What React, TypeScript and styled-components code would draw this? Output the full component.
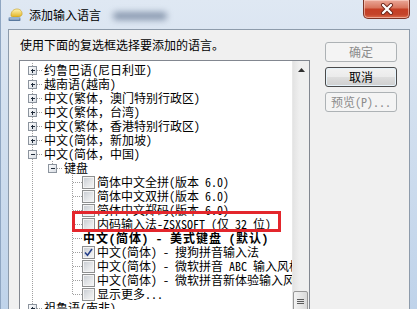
import React from "react";
import styled, { createGlobalStyle } from "styled-components";

const FONT = `"Noto Sans Mono CJK SC", "Noto Sans CJK SC", "DejaVu Sans", sans-serif`;

const GlobalStyle = createGlobalStyle`
  html, body {
    margin: 0;
    padding: 0;
    background: #ffffff;
  }
  body {
    font-family: ${FONT};
    font-size: 12px;
  }
`;

/* ---------- window frame ---------- */
const Window = styled.div`
  position: relative;
  width: 417px;
  height: 309px;
  overflow: hidden;
  display: flex;
  flex-direction: column;
  background: linear-gradient(180deg, #dfe8f3 0%, #d3e0ef 35%, #bfd3ea 100%);
  box-shadow: inset 1px 0 0 #8fa6c2;
`;

const TitleBar = styled.div`
  height: 29px;
  flex: none;
  display: flex;
  align-items: center;
  padding-left: 8px;
`;

const TitleIcon = styled.svg`
  flex: none;
  margin-top: -1px;
`;

const TitleText = styled.span`
  margin-left: 6px;
  line-height: 14px;
  color: #000;
`;

const Blurred = styled.div`
  width: 54px;
  height: 8px;
  margin-left: 12px;
  margin-top: 2px;
  border-radius: 4px;
  background: rgba(70, 90, 120, 0.55);
  filter: blur(3px);
`;

const CloseButton = styled.div`
  align-self: flex-start;
  margin-left: auto;
  margin-right: 7px;
  width: 45px;
  height: 18px;
  display: flex;
  align-items: center;
  justify-content: center;
  border: 1px solid #7c3426;
  border-top: none;
  border-radius: 0 0 5px 5px;
  background: linear-gradient(
    180deg,
    #eaa898 0%,
    #d9775f 42%,
    #c53f25 52%,
    #c4442a 80%,
    #dc6c4c 100%
  );
  box-shadow: inset 0 0 0 1px rgba(255, 220, 210, 0.55);
`;

/* ---------- client area ---------- */
const Client = styled.div`
  flex: 1;
  margin: 0 7px 0 8px;
  border: 1px solid #8d9bab;
  border-bottom: none;
  background: #f0f0f0;
  display: grid;
  grid-template-columns: 291px 72px;
  column-gap: 15px;
  padding-left: 10px;
  align-items: start;
`;

const LeftCol = styled.div`
  display: flex;
  flex-direction: column;
`;

const Hint = styled.div`
  margin: 8px 0 0 1px;
  line-height: 14px;
  color: #000;
  white-space: nowrap;
`;

const Tree = styled.div`
  margin-top: 8px;
  height: 262px;
  display: flex;
  border: 1px solid #828790;
  background: #ffffff;
`;

const TreeBody = styled.div`
  flex: 1;
  overflow: hidden;
  padding: 2px 0 0 2px;
`;

const Row = styled.div`
  height: 14px;
  display: flex;
  align-items: center;
  white-space: nowrap;
`;

const Label = styled.span<{ $bold?: boolean }>`
  margin-left: ${(p) => (p.$bold ? 1 : 2)}px;
  line-height: 14px;
  color: #000;
  font-weight: ${(p) => (p.$bold ? 700 : 400)};
  letter-spacing: ${(p) => (p.$bold ? "1px" : "0")};
`;

const GuideSvg = styled.svg`
  flex: none;
  display: block;
`;

const CheckBox = styled.span`
  flex: none;
  width: 13px;
  height: 13px;
  box-sizing: border-box;
  border: 1px solid #8e8f8f;
  background: linear-gradient(135deg, #c6cad0 0%, #e4e6e8 55%, #f7f7f7 100%);
  box-shadow: inset 0 0 0 1px #f4f4f4;
  display: flex;
  align-items: center;
  justify-content: center;
`;

/* ---------- scrollbar ---------- */
const ScrollBar = styled.div`
  width: 17px;
  flex: none;
  display: flex;
  flex-direction: column;
  background: linear-gradient(90deg, #e3e3e3 0%, #efefef 40%, #efefef 100%);
  border-left: 1px solid #e8e8e8;
  box-sizing: border-box;
`;

const ArrowButton = styled.div`
  height: 17px;
  display: flex;
  align-items: center;
  justify-content: center;
`;

const Thumb = styled.div<{ $offset: number }>`
  margin: ${(p) => p.$offset}px 0 0 0;
  width: 15px;
  height: 20px;
  box-sizing: border-box;
  border: 1px solid #979797;
  border-radius: 2px;
  background: linear-gradient(90deg, #f3f3f3 0%, #e6e6e6 50%, #d9d9d9 100%);
  display: flex;
  align-items: center;
  justify-content: center;
`;

/* ---------- buttons ---------- */
const ButtonCol = styled.div`
  padding-top: 12px;
  display: flex;
  flex-direction: column;
  gap: 5px;
`;

const Button = styled.button<{ $default?: boolean }>`
  width: 72px;
  height: 20px;
  padding: 0;
  font-family: ${FONT};
  font-size: 12px;
  line-height: 18px;
  color: #000;
  border-radius: 3px;
  border: 1px solid ${(p) => (p.$default ? "#4a4a4a" : "#707070")};
  background: linear-gradient(180deg, #f2f2f2 0%, #ebebeb 48%, #dddddd 52%, #cfcfcf 100%);
  box-shadow: inset 0 0 0 1px ${(p) => (p.$default ? "#e6f3fb" : "#fcfcfc")};

  &:disabled {
    border-color: #adb2b5;
    background: #f4f4f4;
    box-shadow: none;
    color: #8c8c8c;
  }
`;

/* ---------- annotation ---------- */
const Highlight = styled.div`
  position: absolute;
  left: 72px;
  top: 211px;
  width: 209px;
  height: 21px;
  box-sizing: border-box;
  border: 3px solid #e3262c;
  pointer-events: none;
`;

/* ---------- data ---------- */
type Vert = "full" | "top" | "none";

interface Node {
  level: number;
  label: string;
  exp?: "plus" | "minus";
  check?: "on" | "off";
  bold?: boolean;
  last?: boolean;
}

const nodes: Node[] = [
  { level: 0, label: "约鲁巴语(尼日利亚)", exp: "plus" },
  { level: 0, label: "越南语(越南)", exp: "plus" },
  { level: 0, label: "中文(繁体，澳门特别行政区)", exp: "plus" },
  { level: 0, label: "中文(繁体，台湾)", exp: "plus" },
  { level: 0, label: "中文(繁体，香港特别行政区)", exp: "plus" },
  { level: 0, label: "中文(简体，新加坡)", exp: "plus" },
  { level: 0, label: "中文(简体，中国)", exp: "minus" },
  { level: 1, label: "键盘", exp: "minus", last: true },
  { level: 2, label: "简体中文全拼(版本 6.0)", check: "off" },
  { level: 2, label: "简体中文双拼(版本 6.0)", check: "off" },
  { level: 2, label: "简体中文郑码(版本 6.0)", check: "off" },
  { level: 2, label: "内码输入法-ZSXSOFT (仅 32 位)", check: "off" },
  { level: 2, label: "中文(简体) - 美式键盘 (默认)", bold: true },
  { level: 2, label: "中文(简体) - 搜狗拼音输入法", check: "on" },
  { level: 2, label: "中文(简体) - 微软拼音 ABC 输入风格", check: "off" },
  { level: 2, label: "中文(简体) - 微软拼音新体验输入风格", check: "off" },
  { level: 2, label: "显示更多...", check: "off", last: true },
  { level: 0, label: "祖鲁语(南非)", exp: "plus" },
];

const DOT = "#a0a0a0";

const Guide = ({ v, h, box }: { v: Vert; h?: boolean; box?: "plus" | "minus" }) => (
  <GuideSvg width={20} height={14} viewBox="0 0 20 14" shapeRendering="crispEdges">
    {v !== "none" && (
      <line x1={10.5} y1={0} x2={10.5} y2={v === "full" ? 14 : 8} stroke={DOT} strokeDasharray="1 1" />
    )}
    {h && <line x1={11} y1={7.5} x2={20} y2={7.5} stroke={DOT} strokeDasharray="1 1" />}
    {box && (
      <g>
        <defs>
          <linearGradient id="expFill" x1="0" y1="0" x2="1" y2="1">
            <stop offset="0" stopColor="#ffffff" />
            <stop offset="1" stopColor="#d6dbe2" />
          </linearGradient>
        </defs>
        <rect x={6.5} y={3.5} width={8} height={8} fill="url(#expFill)" stroke="#8c949e" />
        <line x1={8.5} y1={7.5} x2={13} y2={7.5} stroke="#1f2b3a" />
        {box === "plus" && <line x1={10.5} y1={5.5} x2={10.5} y2={10} stroke="#1f2b3a" />}
      </g>
    )}
  </GuideSvg>
);

const TreeRow = ({ node }: { node: Node }) => {
  const guides: React.ReactNode[] = [];
  for (let col = 0; col < node.level; col++) {
    guides.push(<Guide key={col} v={col === 0 ? "full" : "none"} />);
  }
  guides.push(
    <Guide
      key="own"
      v={node.level === 0 ? "full" : node.last ? "top" : "full"}
      h
      box={node.exp}
    />
  );
  return (
    <Row>
      {guides}
      {node.check && (
        <CheckBox>
          {node.check === "on" && (
            <svg width={9} height={9} viewBox="0 0 9 9">
              <path d="M1 4.5 L3.5 7.2 L8 1" fill="none" stroke="#253f8a" strokeWidth={1.6} />
            </svg>
          )}
        </CheckBox>
      )}
      <Label $bold={node.bold}>{node.label}</Label>
    </Row>
  );
};

export default function App() {
  return (
    <>
      <GlobalStyle />
      <Window>
        <TitleBar>
          <TitleIcon width={15} height={15} viewBox="0 0 15 15">
            <defs>
              <linearGradient id="bubble" x1="0" y1="0" x2="0" y2="1">
                <stop offset="0" stopColor="#fff6b8" />
                <stop offset="1" stopColor="#e2b321" />
              </linearGradient>
              <linearGradient id="base" x1="0" y1="0" x2="0" y2="1">
                <stop offset="0" stopColor="#9fb9d6" />
                <stop offset="1" stopColor="#4f6f96" />
              </linearGradient>
            </defs>
            <path d="M3 8.5 C3 4 6 2 9 2 C12.5 2 14.5 4.5 14 7.5 C13.5 9.5 11 10 8 10 C5.5 10 3 10 3 8.5 Z" fill="url(#bubble)" stroke="#c59a1a" strokeWidth={0.6} />
            <rect x={0.5} y={10} width={12} height={4} rx={1} fill="url(#base)" />
            <line x1={2} y1={12} x2={11} y2={12} stroke="#dce7f3" strokeWidth={0.6} />
          </TitleIcon>
          <TitleText>添加输入语言</TitleText>
          <Blurred />
          <CloseButton>
            <svg width={14} height={12} viewBox="0 0 14 12">
              <path d="M3 2 L11 10 M11 2 L3 10" stroke="#6b2418" strokeWidth={4} strokeLinecap="round" />
              <path d="M3 2 L11 10 M11 2 L3 10" stroke="#ffffff" strokeWidth={2.3} strokeLinecap="round" />
            </svg>
          </CloseButton>
        </TitleBar>
        <Client>
          <LeftCol>
            <Hint>使用下面的复选框选择要添加的语言。</Hint>
            <Tree>
              <TreeBody>
                {nodes.map((n, i) => (
                  <TreeRow key={i} node={n} />
                ))}
              </TreeBody>
              <ScrollBar>
                <ArrowButton>
                  <svg width={7} height={4} viewBox="0 0 7 4">
                    <path d="M0 4 L3.5 0 L7 4 Z" fill="#303030" />
                  </svg>
                </ArrowButton>
                <Thumb $offset={213}>
                  <svg width={7} height={7} viewBox="0 0 7 7" shapeRendering="crispEdges">
                    <line x1={0} y1={1.5} x2={7} y2={1.5} stroke="#5a5a5a" />
                    <line x1={0} y1={3.5} x2={7} y2={3.5} stroke="#5a5a5a" />
                    <line x1={0} y1={5.5} x2={7} y2={5.5} stroke="#5a5a5a" />
                  </svg>
                </Thumb>
              </ScrollBar>
            </Tree>
          </LeftCol>
          <ButtonCol>
            <Button disabled>确定</Button>
            <Button $default>取消</Button>
            <Button disabled>预览(P)...</Button>
          </ButtonCol>
        </Client>
        <Highlight />
      </Window>
    </>
  );
}
